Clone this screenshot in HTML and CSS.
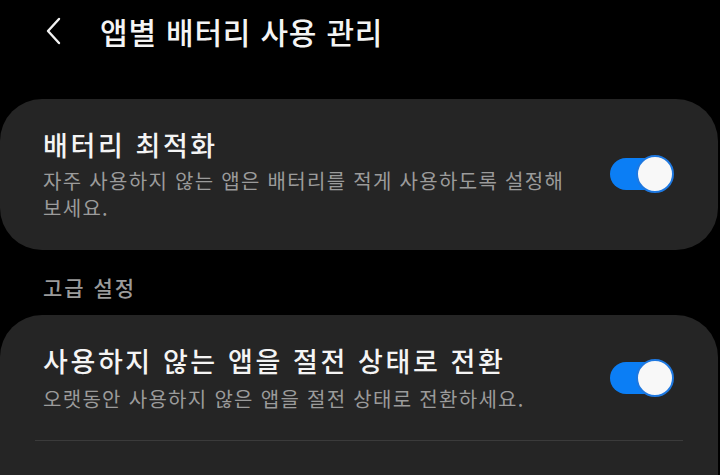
FILE: index.html
```html
<!DOCTYPE html>
<html lang="ko">
<head>
<meta charset="utf-8">
<link rel="stylesheet" href="styles.css">
</head>
<body>
<div class="screen">
  <header class="topbar">
    <span class="back">
      <svg width="20" height="30" viewBox="0 0 20 30"><path d="M15 3 L4 15 L15 27" fill="none" stroke="#f2f2f2" stroke-width="2.4" stroke-linecap="round" stroke-linejoin="round"/></svg>
    </span>
    <h1 class="title">앱별 배터리 사용 관리</h1>
  </header>

  <section class="card first">
    <div class="row">
      <div class="texts">
        <div class="row-title">배터리 최적화</div>
        <div class="row-sub">자주 사용하지 않는 앱은 배터리를 적게 사용하도록 설정해 보세요.</div>
      </div>
      <span class="toggle"><span class="knob"></span></span>
    </div>
  </section>

  <div class="section-label">고급 설정</div>

  <section class="card second">
    <div class="row">
      <div class="texts">
        <div class="row-title">사용하지 않는 앱을 절전 상태로 전환</div>
        <div class="row-sub">오랫동안 사용하지 않은 앱을 절전 상태로 전환하세요.</div>
      </div>
      <span class="toggle"><span class="knob"></span></span>
    </div>
    <div class="divider"></div>
    <div class="row">
      <div class="texts">
        <div class="row-title">절전 상태 앱</div>
      </div>
    </div>
  </section>
</div>
</body>
</html>
```

FILE: styles.css
```css
html, body {
  margin: 0;
  padding: 0;
  background: #000;
}
body {
  font-family: "Noto Sans CJK KR", "Noto Sans", sans-serif;
  color: #f4f4f4;
  width: 720px;
  height: 475px;
  overflow: hidden;
}
.screen {
  display: flex;
  flex-direction: column;
}
.topbar {
  display: flex;
  align-items: center;
  height: 62px;
}
.back {
  display: flex;
  margin-left: 44px;
  width: 20px;
}
.title {
  margin: 0 0 0 36px;
  font-size: 30px;
  font-weight: 500;
  line-height: 40px;
  letter-spacing: 0.8px;
  color: #f4f4f4;
}
.card {
  background: #252525;
  border-radius: 42px;
  margin-right: 2px;
}
.card.first {
  margin-top: 37px;
  padding: 28px 45px 29px 43px;
}
.row {
  display: flex;
  align-items: center;
  justify-content: space-between;
}
.texts {
  display: flex;
  flex-direction: column;
  gap: 4px;
  width: 530px;
}
.row-title {
  font-size: 27px;
  font-weight: 500;
  line-height: 36px;
  letter-spacing: 2.6px;
  color: #f4f4f4;
}
.row-sub {
  font-size: 20px;
  line-height: 27px;
  color: #9b9b9b;
  letter-spacing: 1.3px;
}
.toggle {
  position: relative;
  width: 60px;
  height: 32px;
  border-radius: 16px;
  background: #0b7ef5;
  flex: none;
  margin-right: 3px;
}
.knob {
  position: absolute;
  right: -4px;
  top: -3px;
  width: 34px;
  height: 34px;
  border-radius: 50%;
  background: #f8f8f8;
  border: 2px solid #1e78e0;
}
.section-label {
  margin: 24px 0 14px 43px;
  font-size: 21px;
  font-weight: 500;
  line-height: 27px;
  letter-spacing: 2px;
  color: #9b9b9b;
}
.card.second {
  padding: 28px 45px 0 43px;
  flex: 1;
  border-radius: 42px 42px 0 0;
}
.card.second .texts {
  gap: 6px;
}
.card.second .row:first-child {
  padding-bottom: 28px;
}
.divider {
  height: 1px;
  background: #3b3b3b;
  margin: 0 -10px 0 -8px;
}
.card.second .row:last-child {
  padding-top: 36px;
}
```
